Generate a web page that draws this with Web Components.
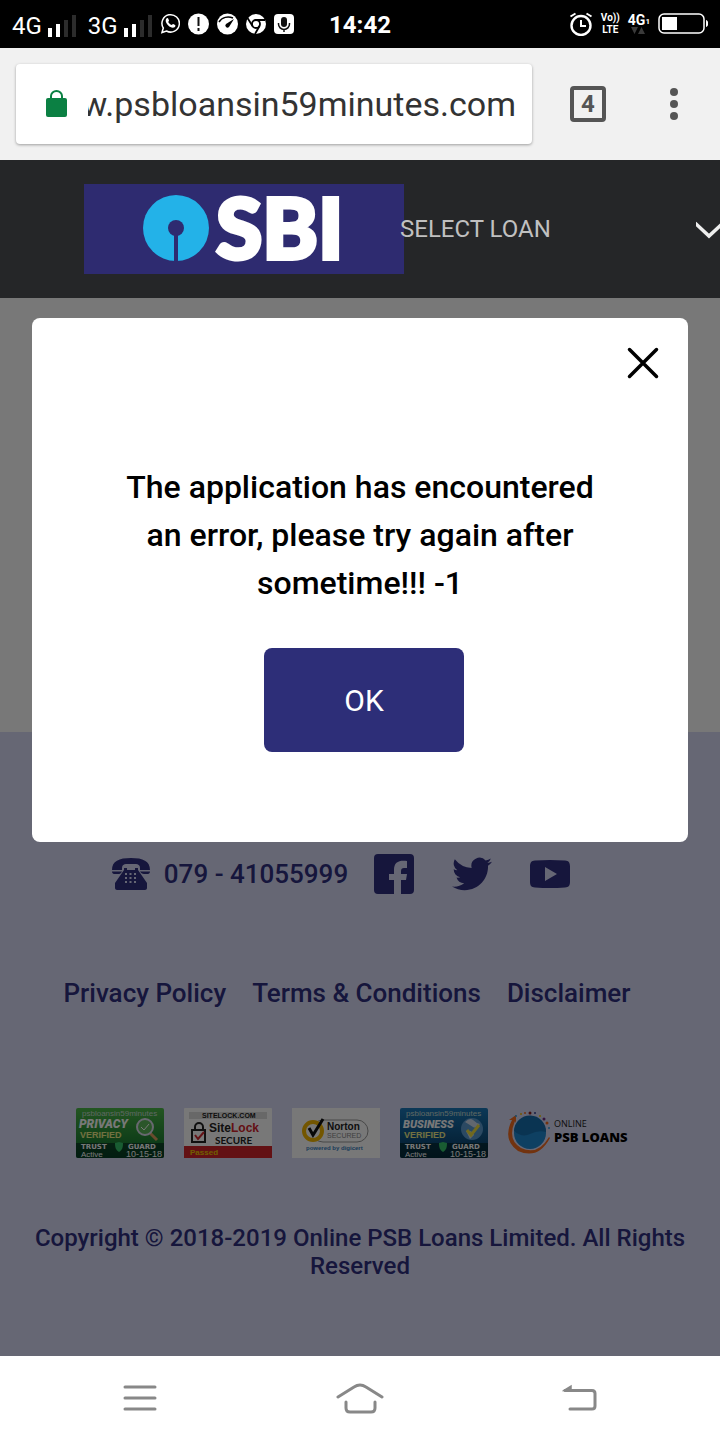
<!DOCTYPE html>
<html lang="en">
<head>
<meta charset="utf-8">
<meta name="viewport" content="width=device-width, initial-scale=1">
<title>Online PSB Loans</title>
<style>
  html, body { margin: 0; }
  body { font-family: Roboto, "Noto Sans", sans-serif; background: #fff; }
</style>
</head>
<body>
<phone-screen>
  <status-bar slot="status"></status-bar>
  <address-bar slot="address"></address-bar>
  <loan-site></loan-site>
  <system-nav slot="nav"></system-nav>
</phone-screen>

<script>
const define = (name, html) => {
  const template = document.createElement('template');
  template.innerHTML = `<style>*{box-sizing:border-box}svg{display:block;flex:none}</style>${html}`;
  customElements.define(name, class extends HTMLElement {
    constructor() {
      super();
      this.attachShadow({ mode: 'open' }).append(template.content.cloneNode(true));
    }
  });
};

define('phone-screen', `
  <style>
    :host { display: flex; flex-direction: column; min-height: 100vh; }
    .page { flex: 1; display: flex; flex-direction: column; }
  </style>
  <slot name="status"></slot>
  <slot name="address"></slot>
  <div class="page"><slot></slot></div>
  <slot name="nav"></slot>`);

define('signal-bars', `
  <style>:host { display: block; }</style>
  <svg width="28" height="22" viewBox="0 0 28 22">
    <path fill="#fff" d="M0 13h4v9H0zM8 9h4v13H8z"/>
    <path fill="#2c2c2c" d="M16 5h4v17h-4zM24 0h4v22h-4z"/>
  </svg>`);

define('status-bar', `
  <style>
    :host { display: grid; grid-template-columns: 1fr auto 1fr; align-items: center;
            height: 48px; padding: 0 12px; background: #000; color: #fff; }
    .group, .icons { display: flex; align-items: center; gap: 8px; }
    .start { gap: 6px; }
    .start signal-bars { padding-top: 4px; }
    .icons { padding-left: 2px; }
    .end { justify-content: flex-end; }
    .net { font-size: 24px; line-height: 28px; padding-top: 4px; }
    .second { padding-left: 6px; }
    time { font-size: 24px; line-height: 32px; font-weight: 700; padding-top: 2px; }
    .volte { display: grid; justify-items: center; font-size: 10px; line-height: 12px; font-weight: 700; }
    .data { display: grid; font-size: 14px; line-height: 14px; font-weight: 700; }
    .data span { display: flex; align-items: flex-end; }
    small { font-size: 8px; line-height: 10px; }
  </style>
  <div class="group start">
    <span class="net">4G</span><signal-bars></signal-bars>
    <span class="net second">3G</span><signal-bars></signal-bars>
    <div class="icons">
    <svg width="20" height="22" viewBox="0 0 20 22"><path d="M2 19.500l1.300-4.500A8.700 8.700 0 1 1 6.500 18z" fill="none" stroke="#fff" stroke-width="1.500"/><path fill="#fff" d="M6.500 5.500c.9-.8 1.500-.5 1.900.4l.6 1.500c.1.600-.7 1.100-.8 1.600.8 1.500 1.900 2.400 3.400 3 .6-.2 1-1.200 1.600-1l1.900 1c.6.400.3 1.700-.5 2.200-2 1.200-4.600-.1-6.300-1.800C6.500 10.700 4.600 7.700 6.500 5.500z"/></svg>
    <svg width="21" height="22" viewBox="0 0 21 22"><circle cx="10.500" cy="11" r="10.500" fill="#fff"/><path stroke="#111" stroke-width="2" d="M10.500 4v9M10.500 15v3"/></svg>
    <svg width="21" height="22" viewBox="0 0 21 22"><circle cx="10.500" cy="11" r="10.500" fill="#fff"/><path fill="none" stroke="#000" stroke-width="1.500" d="M2 9c3-5 9-6 14-4"/><path fill="#000" d="M17 6l-5 8a2 2 0 0 1-3-3z"/></svg>
    <svg width="20" height="22" viewBox="0 0 20 22"><circle cx="10" cy="11" r="10" fill="#fff"/><g fill="none" stroke="#000" stroke-width="1.800"><circle cx="10" cy="11" r="4"/><path d="M9 7h10M6.500 13L1.500 5M13.500 13L9 21"/></g></svg>
    <svg width="20" height="22" viewBox="0 0 20 22"><rect y="1" width="20" height="20" rx="4" fill="#fff"/><rect x="7" y="4" width="6" height="10" rx="3" fill="#111"/><path d="M4.500 10v1a5.500 5.500 0 0 0 11 0v-1M10 16v3" fill="none" stroke="#111" stroke-width="1.500"/></svg>
    </div>
  </div>
  <time>14:42</time>
  <div class="group end">
    <svg width="24" height="24" viewBox="0 0 24 24" fill="none" stroke="#fff"><circle cx="12" cy="13.500" r="9.500" stroke-width="2.400"/><path stroke-width="2" d="M12 8v6h5M1.500 4.500l5-3M22.500 4.500l-5-3"/></svg>
    <div class="volte"><span>Vo))</span><span>LTE</span></div>
    <div class="data"><span>4G<small>1</small></span>
      <svg width="20" height="8" viewBox="0 0 20 8"><path fill="#3a3a3a" d="M3 0h7L6.500 7zM10 7h7L13.500 0z"/></svg></div>
    <svg width="50" height="22" viewBox="0 0 50 22"><rect x="1" y="1" width="45" height="19" rx="5" fill="none" stroke="#fff" stroke-width="1.500"/><path fill="#fff" d="M4 4h15v13H4zM48 7c3 1 3 6 0 7z"/></svg>
  </div>`);

define('address-bar', `
  <style>
    :host { display: flex; align-items: center; height: 112px; padding: 0 26px 0 16px; background: #f1f1f1; color: #555; }
    .box { flex: 1; min-width: 0; display: flex; align-items: center; gap: 20px; height: 80px;
           padding: 0 16px 0 30px; background: #fff; border-radius: 4px; box-shadow: 0 1px 3px rgba(0,0,0,.35); }
    input { flex: 1; min-width: 0; padding: 0; border: 0; outline: 0; background: none; direction: rtl;
            font: 34px/48px Roboto, sans-serif; color: #333; }
    button { border: 0; padding: 0; background: none; color: inherit; font-family: inherit; }
    .tabs { width: 36px; height: 36px; margin-left: 38px; border: 4px solid #555; border-radius: 4px;
            font-size: 24px; line-height: 28px; font-weight: 700; }
    .more { width: 40px; margin-left: 48px; display: grid; place-items: center; }
  </style>
  <div class="box">
    <svg width="22" height="28" viewBox="0 0 22 28"><rect x="0" y="8" width="21" height="19" rx="2" fill="#0b8043"/><path d="M5 10V6a5.500 5 0 0 1 11 0V10" fill="none" stroke="#0b8043" stroke-width="2"/></svg>
    <input type="text" aria-label="Address" value="w.psbloansin59minutes.com">
  </div>
  <button class="tabs" aria-label="Open tabs">4</button>
  <button class="more" aria-label="Menu"><svg width="10" height="34" viewBox="0 0 10 34" fill="#555"><circle cx="5" cy="5" r="4"/><circle cx="5" cy="17" r="4"/><circle cx="5" cy="29" r="4"/></svg></button>`);

define('bank-logo', `
  <style>:host { display: block; flex: none; } svg { overflow: visible; }</style>
  <svg width="320" height="90" viewBox="0 0 320 90">
    <path fill="#2e2b70" d="M0 0h320v90H0z"/>
    <circle cx="92" cy="44" r="33" fill="#23b2e8"/>
    <circle cx="92" cy="44" r="8" fill="#2e2b70"/><path fill="#2e2b70" d="M90 44h4v34h-4z"/>
    <text x="132" y="75" fill="#fff" stroke="#fff" stroke-width="4" font-family="Lato, sans-serif" font-weight="900" font-size="84">SBI</text>
  </svg>`);

define('site-header', `
  <style>
    :host { display: flex; align-items: center; height: 138px; padding-left: 84px; background: #252628; }
    .pick { flex: 1; min-width: 0; display: flex; align-items: center; margin-left: -4px; position: relative; }
    select { flex: 1; min-width: 0; appearance: none; border: 0; padding: 0; background: none; color: #c0c0c0;
             font: 24px/32px Roboto, sans-serif; }
  </style>
  <bank-logo></bank-logo>
  <div class="pick">
    <select aria-label="Select loan"><option>SELECT LOAN</option></select>
    <svg width="24" height="20" viewBox="0 0 24 20"><path d="M-1 4l14 13L27 4" fill="none" stroke="#eee" stroke-width="3.500"/></svg>
  </div>`);

define('error-dialog', `
  <style>
    :host { display: flex; flex-direction: column; align-items: center; background: #fff; border-radius: 8px;
            padding: 24px 24px 90px; color: #000; }
    button { border: 0; padding: 0; font-family: inherit; }
    .close { align-self: flex-end; width: 42px; height: 42px; display: grid; place-items: center; background: none; }
    p { margin: 79px 64px 41px; font-size: 32px; line-height: 48px; font-weight: 500; text-align: center; }
    .ok { width: 200px; height: 104px; margin-left: 8px; border-radius: 8px; background: #2d2e78; color: #fff; font-size: 30px; }
  </style>
  <button class="close" aria-label="Close"><svg width="32" height="32" viewBox="0 0 32 32"><path d="M2.500 2.500l27 27M29.500 2.500l-27 27" stroke="#000" stroke-width="3.500" stroke-linecap="round"/></svg></button>
  <p><slot></slot></p>
  <button class="ok">OK</button>`);

define('contact-row', `
  <style>
    :host { display: flex; align-items: center; justify-content: center; gap: 38px; padding-right: 38px; }
    a { color: inherit; text-decoration: none; }
    .tel { display: flex; align-items: center; gap: 14px; margin-right: -12px; font-size: 26px; line-height: 40px; font-weight: 500; }
    svg { fill: currentColor; }
  </style>
  <a class="tel" href="tel:07941055999">
    <svg width="38" height="34" viewBox="0 0 38 34"><path d="M0 13C0 4 7 1 19 1s19 3 19 12H28v-2c0-3-2-4-4-4H14c-2 0-4 1-4 4v2H0zM0 14.500h10c-1 2-2 2.500-4 2.500H2c-1 0-2-1-2-2.500zM28 14.500h10c0 1.500-1 2.500-2 2.500h-4c-2 0-3-1-4-2.500z"/><path fill-rule="evenodd" d="M12 11h3v2h8v-2h3v2l9 13v5c0 1-1 2-2 2H5c-1 0-2-1-2-2v-5l9-13zM13 16v2h2v-2zm4.500 0v2h2v-2zm4.500 0v2h2v-2zM13 20v2h2v-2zm4.500 0v2h2v-2zm4.500 0v2h2v-2zM13 24v2h2v-2zm4.500 0v2h2v-2zm4.500 0v2h2v-2z"/></svg>
    <span>079 - 41055999</span></a>
  <a href="#facebook" aria-label="Facebook"><svg width="40" height="40" viewBox="0 0 40 40"><path d="M4 0h32a4 4 0 0 1 4 4v32a4 4 0 0 1-4 4h-9V26h5l1-6h-6v-3c0-2 1-3 3-3h3V7c-8-1-13 1-13 9v4h-5v6h5v14H4a4 4 0 0 1-4-4V4a4 4 0 0 1 4-4z"/></svg></a>
  <a href="#twitter" aria-label="Twitter"><svg width="40" height="40" viewBox="0 0 24 24"><path d="M24 4.600a10 10 0 0 1-2.800.8 5 5 0 0 0 2.100-2.700 10 10 0 0 1-3.100 1.200 4.900 4.900 0 0 0-8.400 4.500A14 14 0 0 1 1.700 3.100a4.900 4.900 0 0 0 1.500 6.600 5 5 0 0 1-2.200-.6v.1a4.900 4.900 0 0 0 3.900 4.800 5 5 0 0 1-2.200.1 4.900 4.900 0 0 0 4.600 3.400A9.900 9.900 0 0 1 0 19.500a14 14 0 0 0 7.600 2.200c9 0 14.300-7.600 14-14.600A10 10 0 0 0 24 4.600z"/></svg></a>
  <a href="#youtube" aria-label="YouTube"><svg width="40" height="40" viewBox="0 0 40 40"><path fill-rule="evenodd" d="M5 6.500q15-1 30 0c4 .3 5 2.500 5 6v15c0 4-1 5.700-5 6q-15 1-30 0c-4-.3-5-2-5-6v-15c0-3.500 1-5.700 5-6zM15 13v14l12-7z"/></svg></a>`);

define('policy-links', `
  <style>
    :host { display: flex; justify-content: center; gap: 26px; padding-right: 26px; font-size: 26px; line-height: 32px; font-weight: 500; }
    a { color: inherit; text-decoration: none; white-space: nowrap; }
  </style>
  <a href="#privacy">Privacy Policy</a>
  <a href="#terms">Terms &amp; Conditions</a>
  <a href="#disclaimer">Disclaimer</a>`);

const guardBadge = (id, top, bottom, word, size, emblem) => `
  <svg width="88" height="50" viewBox="0 0 88 50">
    <defs><linearGradient id="${id}" x2="0" y2="1"><stop stop-color="${top}"/><stop offset="1" stop-color="${bottom}"/></linearGradient></defs>
    <rect width="88" height="50" rx="2" fill="url(#${id})"/>
    <path d="M0 35h88v13a2 2 0 0 1-2 2H2a2 2 0 0 1-2-2z" fill="#04221f" opacity=".6"/>
    ${emblem}
    <g font-family="Liberation Sans, sans-serif" fill="#fff">
      <text x="6" y="8" font-size="8" fill="#c8ddd2">psbloansin59minutes</text>
      <text x="3" y="20" font-size="${size}" font-family="Roboto, sans-serif" font-weight="900" font-style="italic">${word}</text>
      <text x="4" y="30" font-size="9" font-weight="700" fill="#f3f08a">VERIFIED</text>
      <text x="5" y="41" font-size="7" font-weight="700" font-family="DejaVu Sans, sans-serif">TRUST</text>
      <text x="52" y="41" font-size="7" font-weight="700" font-family="DejaVu Sans, sans-serif">GUARD</text>
      <text x="5" y="49" font-size="8">Active</text>
      <text x="50" y="49" font-size="9">10-15-18</text>
    </g>
    <path d="M39 35l4-1 4 1c0 5-1 7-4 9-3-2-4-4-4-9z" fill="#35c46a"/>
  </svg>`;

define('trust-badges', `
  <style>
    :host { display: flex; align-items: center; justify-content: center; gap: 20px; padding-right: 12px; }
    a { display: block; }
  </style>
  <a href="#privacy-verified">${guardBadge('green', '#4cb648', '#0b6a2c', 'PRIVACY', 12, '<path d="M73 24l8 8" stroke="#e0a060" stroke-width="3"/><circle cx="69" cy="19" r="8" fill="#5cb85a" stroke="#dde" stroke-width="2"/><path d="M65 19l3 3 5-6" fill="none" stroke="#fff" stroke-width="1"/>')}</a>
  <a href="#sitelock"><svg width="88" height="50" viewBox="0 0 88 50">
    <rect width="88" height="50" rx="1" fill="#fff"/><path fill="#ddd" d="M5 4h78v7H5z"/><path fill="#d3242b" d="M0 38h88v12H0z"/>
    <rect x="8" y="22" width="13" height="12" fill="#fff" stroke="#222" stroke-width="2"/><path d="M11 21v-2a4 4 0 0 1 8 0v2" fill="none" stroke="#222" stroke-width="2"/><path d="M11 27l3 4 6-7" fill="none" stroke="#d3242b" stroke-width="2"/>
    <g font-family="Liberation Sans, sans-serif" font-weight="700" fill="#222">
      <text x="18" y="10" font-size="7">SITELOCK.COM</text>
      <text x="25" y="24" font-size="12">Site<tspan fill="#d3242b">Lock</tspan></text>
      <text x="31" y="36" font-size="10" font-family="Lato, sans-serif">SECURE</text>
      <text x="6" y="47" font-size="8" fill="#f0c800">Passed</text>
    </g></svg></a>
  <a href="#norton"><svg width="88" height="50" viewBox="0 0 88 50">
    <path fill="#fff" d="M0 0h88v50H0z"/><rect x="20" y="12" width="56" height="22" rx="11" fill="#fff" stroke="#999"/>
    <circle cx="21" cy="23" r="9" fill="#fff" stroke="#f5b800" stroke-width="4"/><path d="M17 20l4 7L31 11" fill="none" stroke="#111" stroke-width="3"/>
    <g font-family="Liberation Sans, sans-serif"><text x="35" y="22" font-size="10" font-weight="700" fill="#222">Norton</text>
    <text x="35" y="30" font-size="7" fill="#888">SECURED</text>
    <text x="14" y="42" font-size="6" font-weight="700" fill="#3a80c0">powered by digicert</text></g></svg></a>
  <a href="#business-verified">${guardBadge('blue', '#1b78b8', '#06385f', 'BUSINESS', 11, '<circle cx="72" cy="21" r="11" fill="#5b9bd0"/><path d="M65 14q5-5 8-2t7 4q-4 5-7 3t-8-5zM66 23q6-1 8 4l-4 4z" fill="#cfdcec"/><path d="M67 22l4 5 8-10" fill="none" stroke="#f0e040" stroke-width="3"/>')}</a>
  <a href="#psb-loans"><svg width="124" height="50" viewBox="0 0 124 50">
    <circle cx="22" cy="25" r="16" fill="#1e88d0"/><path d="M6 23q8 7 16 3t16-2a16 16 0 0 0-32-1z" fill="#176fae"/>
    <path d="M4 12Q-6 32 10 43q20 9 32-13l-1-1Q30 48 13 40-1 32 7 13l1 2V7L1 12z" fill="#f36c21"/>
    <g fill="#f36c21"><circle cx="8" cy="8" r="1" fill="#39a0e0"/><circle cx="13" cy="6" r="1" fill="#f5b800"/><circle cx="17" cy="5" r="1"/><circle cx="22" cy="5" r="1.500" fill="#8c2020"/><circle cx="27" cy="5" r="1" fill="#304090"/><circle cx="32" cy="8" r="1" fill="#f5c800"/><circle cx="36" cy="11" r="1.500" fill="#703080"/><circle cx="39" cy="15" r="1.500"/><circle cx="41" cy="20" r="1" fill="#39a0e0"/></g>
    <g font-family="Open Sans, sans-serif" fill="#000"><text x="46" y="19" font-size="9" fill="#222">ONLINE</text>
    <text x="46" y="34" font-size="13" font-weight="800">PSB LOANS</text></g></svg></a>`);

define('site-footer', `
  <style>
    :host { display: flex; flex-direction: column; padding: 122px 24px 76px; background: #d9dbf7; color: #302f80; }
    policy-links { margin-top: 83px; }
    trust-badges { margin-top: 99px; }
    p { margin: 66px 0 0; font-size: 24px; line-height: 28px; font-weight: 500; text-align: center; }
  </style>
  <contact-row></contact-row>
  <policy-links></policy-links>
  <trust-badges></trust-badges>
  <p>Copyright © 2018-2019 Online PSB Loans Limited. All Rights Reserved</p>`);

define('loan-site', `
  <style>
    :host { flex: 1; display: flex; flex-direction: column; }
    .body { flex: 1; display: flex; flex-direction: column; position: relative; }
    main { flex: 1; background: #fff; }
    .scrim { position: absolute; inset: 0; padding: 20px 32px; background: rgba(0,0,0,.53); }
  </style>
  <site-header></site-header>
  <div class="body">
    <main></main>
    <site-footer></site-footer>
    <div class="scrim">
      <error-dialog role="alertdialog" aria-label="Error">The application has encountered an error, please try again after sometime!!! -1</error-dialog>
    </div>
  </div>`);

define('system-nav', `
  <style>
    :host { display: grid; grid-template-columns: repeat(3, 1fr); height: 84px; padding: 0 30px; background: #fff; }
    button { display: grid; place-items: center; border: 0; padding: 0; background: none; }
    svg { fill: none; stroke: #888; stroke-width: 3; stroke-linecap: round; }
  </style>
  <button aria-label="Recent apps"><svg width="34" height="28" viewBox="0 0 34 28"><path d="M2 3h30M2 14h30M2 25h30"/></svg></button>
  <button aria-label="Home"><svg width="48" height="32" viewBox="0 0 48 32"><path d="M2 15L18 5q6-4 12 0L46 15M10 20v6q0 4 4 4h21q4 0 4-4v-6"/></svg></button>
  <button aria-label="Back"><svg width="36" height="28" viewBox="0 0 36 28"><path d="M3 6.500h27q3 0 3 3V22q0 3-3 3H8"/><path d="M2 6.500l7-4.500v4.500z" fill="#888" stroke-width="1.500"/></svg></button>`);
</script>
</body>
</html>
